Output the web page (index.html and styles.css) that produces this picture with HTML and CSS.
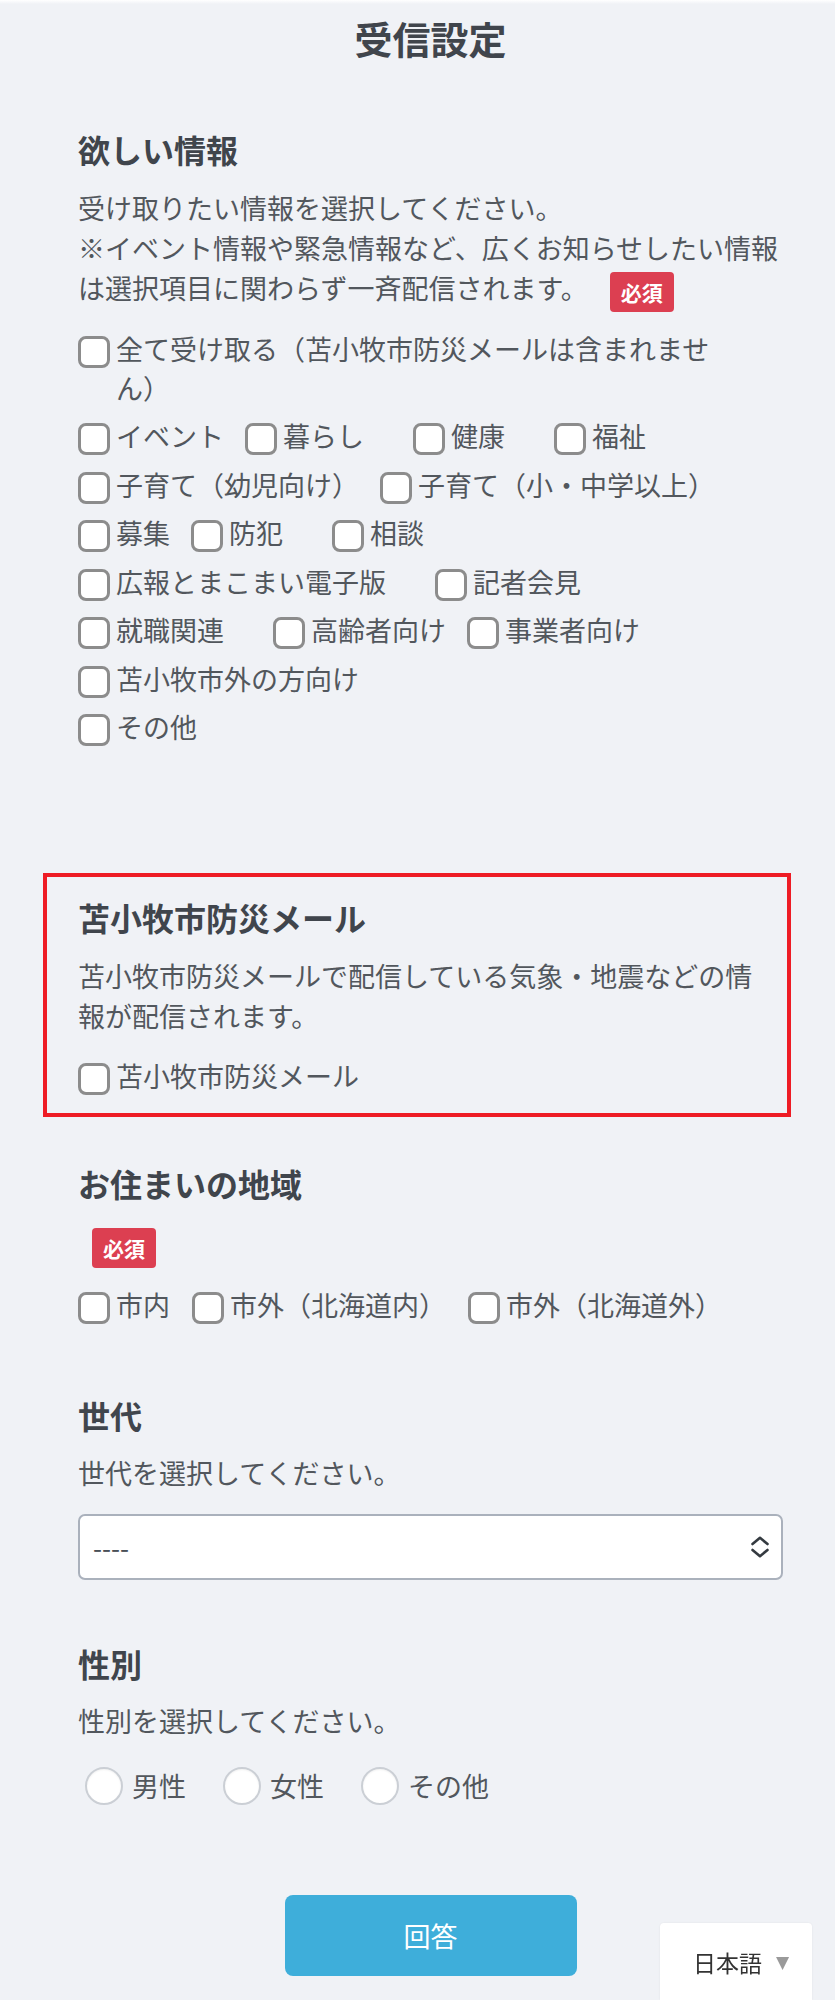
FILE: index.html
```html
<!DOCTYPE html>
<html lang="ja">
<head>
<meta charset="utf-8">
<title>受信設定</title>
<link rel="stylesheet" href="styles.css">
</head>
<body>
<div class="topbar"></div>
<main class="form">
  <h1 class="title">受信設定</h1>

  <section class="sec sec-info">
    <h2 class="sec-title">欲しい情報</h2>
    <p class="desc">受け取りたい情報を選択してください。<br>※イベント情報や緊急情報など、広くお知らせしたい情報<br>は選択項目に関わらず一斉配信されます。<span class="badge badge-inline">必須</span></p>
    <div class="checks">
      <div class="row"><label class="check wrap"><input type="checkbox"><span class="lbl">全て受け取る（苫小牧市防災メールは含まれません）</span></label></div>
      <div class="row">
        <label class="check"><input type="checkbox"><span class="lbl">イベント</span></label>
        <label class="check sp"><input type="checkbox"><span class="lbl">暮らし</span></label>
        <label class="check sp"><input type="checkbox"><span class="lbl">健康</span></label>
        <label class="check"><input type="checkbox"><span class="lbl">福祉</span></label>
      </div>
      <div class="row">
        <label class="check"><input type="checkbox"><span class="lbl">子育て（幼児向け）</span></label>
        <label class="check"><input type="checkbox"><span class="lbl">子育て（小・中学以上）</span></label>
      </div>
      <div class="row">
        <label class="check"><input type="checkbox"><span class="lbl">募集</span></label>
        <label class="check sp"><input type="checkbox"><span class="lbl">防犯</span></label>
        <label class="check"><input type="checkbox"><span class="lbl">相談</span></label>
      </div>
      <div class="row">
        <label class="check sp"><input type="checkbox"><span class="lbl">広報とまこまい電子版</span></label>
        <label class="check"><input type="checkbox"><span class="lbl">記者会見</span></label>
      </div>
      <div class="row">
        <label class="check sp"><input type="checkbox"><span class="lbl">就職関連</span></label>
        <label class="check"><input type="checkbox"><span class="lbl">高齢者向け</span></label>
        <label class="check"><input type="checkbox"><span class="lbl">事業者向け</span></label>
      </div>
      <div class="row">
        <label class="check"><input type="checkbox"><span class="lbl">苫小牧市外の方向け</span></label>
      </div>
      <div class="row">
        <label class="check"><input type="checkbox"><span class="lbl">その他</span></label>
      </div>
    </div>
  </section>

  <section class="sec sec-bousai">
    <h2 class="sec-title">苫小牧市防災メール</h2>
    <p class="desc">苫小牧市防災メールで配信している気象・地震などの情報が配信されます。</p>
    <div class="checks">
      <div class="row"><label class="check"><input type="checkbox"><span class="lbl">苫小牧市防災メール</span></label></div>
    </div>
  </section>

  <section class="sec sec-area">
    <h2 class="sec-title">お住まいの地域</h2>
    <p class="desc badge-line"><span class="badge badge-solo">必須</span></p>
    <div class="checks">
      <div class="row row-area">
        <label class="check"><input type="checkbox"><span class="lbl">市内</span></label>
        <label class="check"><input type="checkbox"><span class="lbl">市外（北海道内）</span></label>
        <label class="check"><input type="checkbox"><span class="lbl">市外（北海道外）</span></label>
      </div>
    </div>
  </section>

  <section class="sec sec-age">
    <h2 class="sec-title">世代</h2>
    <p class="desc">世代を選択してください。</p>
    <div class="select-wrap">
      <select class="select">
        <option>----</option>
      </select>
      <svg class="select-icon" width="18" height="22" viewBox="0 0 18 22" aria-hidden="true">
        <polyline points="1.5,8 9,1.8 16.5,8" fill="none" stroke="#343a40" stroke-width="2.6" stroke-linecap="round" stroke-linejoin="round"/>
        <polyline points="1.5,14 9,20.2 16.5,14" fill="none" stroke="#343a40" stroke-width="2.6" stroke-linecap="round" stroke-linejoin="round"/>
      </svg>
    </div>
  </section>

  <section class="sec sec-sex">
    <h2 class="sec-title">性別</h2>
    <p class="desc">性別を選択してください。</p>
    <div class="radios">
      <label class="radio"><input type="radio" name="sex"><span class="lbl">男性</span></label>
      <label class="radio"><input type="radio" name="sex"><span class="lbl">女性</span></label>
      <label class="radio"><input type="radio" name="sex"><span class="lbl">その他</span></label>
    </div>
  </section>

  <div class="actions">
    <button type="button" class="submit">回答</button>
  </div>
</main>

<div class="lang">
  <span class="lang-text">日本語</span>
  <span class="lang-arrow">▼</span>
</div>
</body>
</html>
```

FILE: styles.css
```css
html, body {
  margin: 0;
  padding: 0;
}
body {
  background: #f0f2f6;
  font-family: "Noto Sans CJK JP", "Noto Sans", sans-serif;
  color: #52575d;
  min-height: 2000px;
}
.topbar {
  height: 4px;
  background: linear-gradient(#ffffff, #f0f2f6);
}
.form {
  margin-left: 78px;
  width: 705px;
}
.title {
  margin: 11px 0 0;
  font-size: 38px;
  line-height: 46px;
  font-weight: 700;
  color: #40454c;
  text-align: center;
}
.sec-title {
  margin: 0;
  font-size: 32px;
  line-height: 38px;
  font-weight: 700;
  color: #40454c;
}
.desc {
  margin: 20px 0 0;
  font-size: 27px;
  line-height: 40px;
}
.sec-info { margin-top: 69px; }
.sec-info .checks { margin-top: 20.5px; }

.badge {
  display: inline-block;
  box-sizing: border-box;
  height: 40px;
  padding: 0 11px;
  background: #dc3f51;
  color: #fff;
  border-radius: 4px;
  font-size: 21px;
  line-height: 40px;
  font-weight: 700;
  vertical-align: top;
  margin-top: 4px;
  margin-bottom: -4px;
}
.badge-inline { margin-left: 22px; }
.badge-solo { margin-left: 14px; }

.checks {
  display: flex;
  flex-direction: column;
  gap: 9.5px;
}
.row {
  display: flex;
  gap: 21px;
}
.row-area { gap: 22px; }
.check {
  display: flex;
  align-items: flex-start;
  gap: 6px;
  font-size: 27px;
  line-height: 39px;
}
.check .lbl { display: block; }
.check.sp { margin-right: 28px; }
.check input {
  -webkit-appearance: none;
  appearance: none;
  flex: none;
  box-sizing: border-box;
  width: 32px;
  height: 32px;
  margin: 7px 0 0;
  border: 3px solid #8c8c8c;
  border-radius: 8px;
  background: #fff;
}
.wrap .lbl { width: 610px; }

.sec-bousai {
  margin: 127px -8px 0 -35px;
  border: 4px solid #ee1c25;
  padding: 21px 26px 18.5px 31px;
}
.sec-bousai .checks { margin-top: 19.5px; }

.sec-area { margin-top: 47px; }
.sec-area .desc { margin-top: 22px; }
.sec-area .checks { margin-top: 20.5px; }

.sec-age { margin-top: 72px; }
.sec-age .desc { margin-top: 19px; }
.select-wrap {
  position: relative;
  margin-top: 21px;
}
.select {
  -webkit-appearance: none;
  appearance: none;
  display: block;
  box-sizing: border-box;
  width: 100%;
  height: 66px;
  padding: 0 40px 0 13px;
  border: 2px solid #aab1bc;
  border-radius: 7px;
  background: #fff;
  font-family: "Noto Sans CJK JP", "Noto Sans", sans-serif;
  font-size: 26px;
  color: #495057;
}
.select-icon {
  position: absolute;
  right: 14px;
  top: 22px;
  pointer-events: none;
}

.sec-sex { margin-top: 64px; }
.sec-sex .desc { margin-top: 19px; }
.radios {
  display: flex;
  gap: 37px;
  margin-top: 25px;
  padding-left: 7px;
}
.radio {
  display: flex;
  align-items: center;
  gap: 9px;
  font-size: 27px;
  line-height: 40px;
}
.radio input {
  -webkit-appearance: none;
  appearance: none;
  box-sizing: border-box;
  width: 38px;
  height: 38px;
  margin: 0;
  border: 2px solid #cbcfd5;
  border-radius: 50%;
  background: #fff;
  box-shadow: inset 0 1px 2px rgba(0, 0, 0, 0.06);
}

.actions {
  display: flex;
  justify-content: center;
  margin-top: 89px;
}
.submit {
  width: 292px;
  height: 81px;
  border: none;
  border-radius: 8px;
  background: #3eaeda;
  color: #fff;
  font-family: "Noto Sans CJK JP", "Noto Sans", sans-serif;
  font-size: 27px;
}

.lang {
  position: fixed;
  right: 23px;
  bottom: 0;
  width: 152px;
  height: 77px;
  box-sizing: border-box;
  padding-left: 33px;
  display: flex;
  align-items: center;
  gap: 14px;
  background: #fff;
  border-radius: 4px 4px 0 0;
  box-shadow: 0 0 2px rgba(0, 0, 0, 0.08);
}
.lang-text {
  font-size: 23px;
  color: #333;
}
.lang-arrow {
  font-size: 17px;
  color: #9a9a9a;
  font-family: "DejaVu Sans", sans-serif;
}
```
